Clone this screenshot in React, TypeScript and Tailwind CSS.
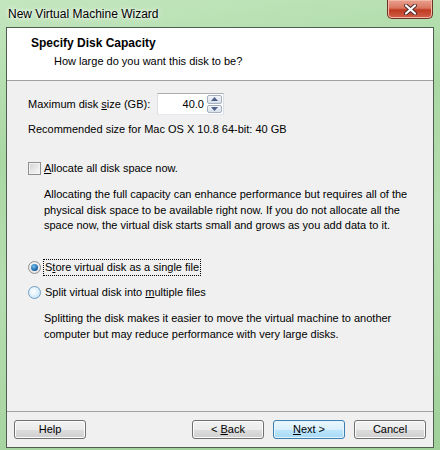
import React from "react";

const font = { fontFamily: '"Liberation Sans", Arial, sans-serif' };

const Btn = ({ children, primary }: { children: React.ReactNode; primary?: boolean }) => (
  <div
    className={
      "w-[72px] h-[19px] rounded-[3px] border flex items-center justify-center text-[11px] text-black " +
      (primary
        ? "border-[#3c7fb1] bg-[linear-gradient(#eaf6fd_0%,#d9f0fc_50%,#bee6fd_51%,#a7d9f5_100%)] shadow-[inset_0_0_0_1px_#e6f4fc]"
        : "border-[#707070] bg-[linear-gradient(#f2f2f2_0%,#ebebeb_50%,#dddddd_51%,#cfcfcf_100%)] shadow-[inset_0_0_0_1px_#fcfcfc]")
    }
  >
    <span className="whitespace-pre">{children}</span>
  </div>
);

const Radio = ({ checked }: { checked?: boolean }) => (
  <div
    className={
      "w-[13px] h-[13px] rounded-full border flex items-center justify-center " +
      (checked
        ? "border-[#8e8f8f] bg-[radial-gradient(circle_at_50%_40%,#ffffff,#dcdcdc)]"
        : "border-[#6f9fc5] bg-[radial-gradient(circle_at_40%_40%,#ffffff_0%,#d6ecfa_60%,#a9d5f3_100%)]")
    }
  >
    {checked && (
      <div className="w-[7px] h-[7px] rounded-full bg-[radial-gradient(circle_at_40%_35%,#6cc3ee,#1a5aa0_70%,#10305c)]" />
    )}
  </div>
);

export default function App() {
  return (
    <div
      style={font}
      className="w-[440px] h-[450px] flex flex-col bg-[linear-gradient(170deg,#c4e6bf_0%,#a9d8a3_30%,#b6ddb0_55%,#9fd199_100%)]"
    >
      {/* title bar */}
      <div className="h-[27px] flex justify-between items-start">
        <div className="pl-[8px] pt-[5px] text-[12px] text-black [text-shadow:0_0_6px_#ffffff,0_0_3px_#ffffff]">
          New Virtual Machine Wizard
        </div>
        <div className="mr-[7px] w-[46px] h-[19px] rounded-b-[5px] border border-t-0 border-[#6e3325] bg-[linear-gradient(#eaa190_0%,#d8765f_45%,#bf3a20_55%,#d0604a_100%)] flex items-center justify-center shadow-[inset_0_0_0_1px_#f3b7a8]">
          <svg width="13" height="11" viewBox="0 0 13 11">
            <path d="M2 1.5 L11 9.5 M11 1.5 L2 9.5" stroke="#4a2a2a" strokeWidth="4" strokeLinecap="round" />
            <path d="M2 1.5 L11 9.5 M11 1.5 L2 9.5" stroke="#ffffff" strokeWidth="2.2" strokeLinecap="round" />
          </svg>
        </div>
      </div>

      {/* client area */}
      <div className="mx-[6px] mb-[2px] flex-1 border border-[#4d5e50] bg-[#f0f0f0] flex flex-col text-[11px] text-black">
        <div className="h-[53px] bg-white border-b border-[#a0a0a0] pl-[24px] pt-[8px]">
          <div className="font-bold text-[12px] leading-[15px]">Specify Disk Capacity</div>
          <div className="pl-[23px] pt-[3px] leading-[15px]">How large do you want this disk to be?</div>
        </div>

        <div className="flex-1 pl-[21px] pt-[12px] leading-[15px]">
          <div className="flex items-center h-[22px]">
            <div className="w-[129px]">
              Maximum disk <span className="underline">s</span>ize (GB):
            </div>
            <div className="flex h-[22px] border border-[#abadb3] border-b-[#e3e9ef] border-x-[#dbdfe6] bg-white">
              <div className="w-[49px] pr-[3px] text-right leading-[20px]">40.0</div>
              <div className="w-[16px] flex flex-col gap-[1px] p-[1px] pl-0">
                <div className="flex-1 rounded-[2px] border border-[#a7b0be] bg-[linear-gradient(#f3f6fa,#d9e0ea)] flex items-center justify-center">
                  <svg width="7" height="4" viewBox="0 0 7 4"><path d="M0 4 L3.5 0 L7 4 Z" fill="#4b5f88" /></svg>
                </div>
                <div className="flex-1 rounded-[2px] border border-[#a7b0be] bg-[linear-gradient(#f3f6fa,#d9e0ea)] flex items-center justify-center">
                  <svg width="7" height="4" viewBox="0 0 7 4"><path d="M0 0 L3.5 4 L7 0 Z" fill="#4b5f88" /></svg>
                </div>
              </div>
            </div>
          </div>
          <div className="mt-[7px]">Recommended size for Mac OS X 10.8 64-bit: 40 GB</div>

          <div className="mt-[24px] flex items-center gap-[3px]">
            <div className="w-[13px] h-[13px] border border-[#8e8f8f] bg-[linear-gradient(135deg,#d2d2d2,#fbfbfb)] shadow-[inset_0_0_0_1px_#f4f4f4]" />
            <div>
              <span className="underline">A</span>llocate all disk space now.
            </div>
          </div>
          <div className="mt-[11px] pl-[16px] leading-[15.5px]">
            Allocating the full capacity can enhance performance but requires all of the
            <br />
            physical disk space to be available right now. If you do not allocate all the
            <br />
            space now, the virtual disk starts small and grows as you add data to it.
          </div>

          <div className="mt-[26px] flex items-center gap-[3px]">
            <Radio checked />
            <div className="outline outline-1 outline-dotted outline-black px-[1px]">
              S<span className="underline">t</span>ore virtual disk as a single file
            </div>
          </div>
          <div className="mt-[10px] flex items-center gap-[3px]">
            <Radio />
            <div className="px-[1px]">
              Split virtual disk into <span className="underline">m</span>ultiple files
            </div>
          </div>
          <div className="mt-[10px] pl-[16px] leading-[16px]">
            Splitting the disk makes it easier to move the virtual machine to another
            <br />
            computer but may reduce performance with very large disks.
          </div>
        </div>

        <div className="h-[36px] border-t border-[#a0a0a0] px-[7px] pt-[8px] flex">
          <Btn>Help</Btn>
          <div className="flex-1" />
          <div className="flex gap-[9px]">
            <Btn>
              {"< "}
              <span className="underline">B</span>
              {"ack"}
            </Btn>
            <Btn primary>
              <span className="underline">N</span>
              {"ext >"}
            </Btn>
            <Btn>Cancel</Btn>
          </div>
        </div>
      </div>
    </div>
  );
}
